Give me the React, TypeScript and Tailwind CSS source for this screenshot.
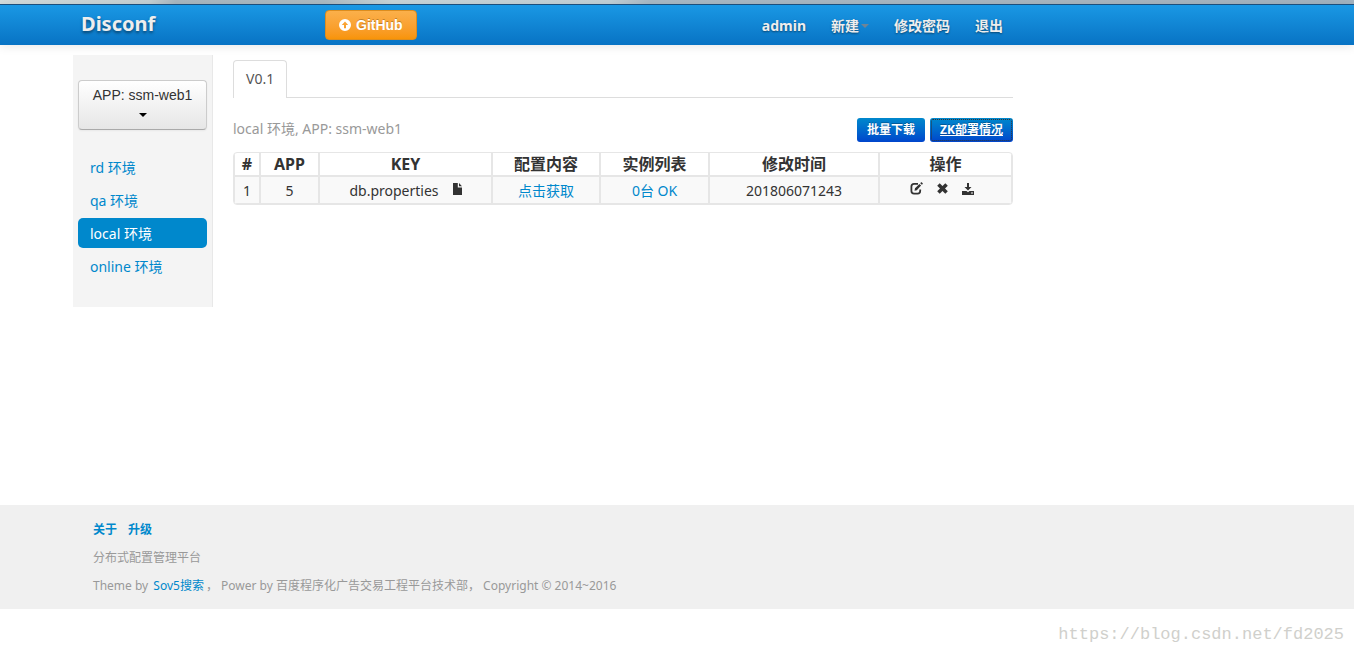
import type { ReactNode } from "react";

const environments = [
  { name: "rd 环境", active: false },
  { name: "qa 环境", active: false },
  { name: "local 环境", active: true },
  { name: "online 环境", active: false },
];

const columns = [
  { title: "#", width: "w-[25px]" },
  { title: "APP", width: "w-[59px]" },
  { title: "KEY", width: "w-[173px]" },
  { title: "配置内容", width: "w-[108px]" },
  { title: "实例列表", width: "w-[109px]" },
  { title: "修改时间", width: "w-[170px]" },
  { title: "操作", width: "w-[134px]" },
];

function UploadIcon() {
  return (
    <svg width="12" height="12" viewBox="0 0 12 12" aria-hidden="true">
      <path
        fillRule="evenodd"
        fill="#fff"
        d="M6 0a6 6 0 1 1 0 12A6 6 0 0 1 6 0ZM6 2.6 2.8 6H5v3.3h2V6h2.2Z"
      />
    </svg>
  );
}

function FileIcon() {
  return (
    <svg width="9" height="12" viewBox="0 0 9 12" aria-hidden="true">
      <path fill="#333" d="M0 0h4.800v4.600H9V12H0ZM6 0l3 3.300H6Z" />
    </svg>
  );
}

function EditIcon() {
  return (
    <svg width="13" height="13" viewBox="0 0 13 13" aria-hidden="true">
      <path
        fill="none"
        stroke="#333"
        strokeWidth="1.8"
        d="M8 1.9H4Q1.4 1.9 1.4 4.400v4.700q0 2.500 2.600 2.500h3.700q2.500 0 2.500-2.500V7.600"
      />
      <path fill="#333" d="m4.500 8.800.5-2.500 4.400-4.400 1.700 1.700L6.800 8.300ZM10.200 1.200l.9-.9q.3-.3.6 0l1 1q.3.3 0 .6l-.8.9Z" />
    </svg>
  );
}

function RemoveIcon() {
  return (
    <svg width="11" height="11" viewBox="0 0 11 11" aria-hidden="true">
      <path
        fill="#333"
        d="M2.700.2 5.500 3 8.300.2l2.500 2.500L8 5.500l2.800 2.800-2.500 2.500L5.500 8l-2.800 2.800L.2 8.300 3 5.500.2 2.700Z"
      />
    </svg>
  );
}

function DownloadIcon() {
  return (
    <svg width="12" height="12" viewBox="0 0 12 12" aria-hidden="true">
      <path fill="#333" d="M5 0h2v4h2.500L6 7.600 2.500 4H5Z" />
      <path fill="#333" fillRule="evenodd" d="M0 8h4.500L6 9.200 7.500 8H12v4H0ZM9 9.500v1h2v-1Z" />
    </svg>
  );
}

function Caret({ className }: { className: string }) {
  return (
    <svg className={className} width="8" height="4" viewBox="0 0 8 4" aria-hidden="true">
      <path fill="currentColor" d="M0 0h8L4 4Z" />
    </svg>
  );
}

function IconButton({ label, children }: { label: string; children: ReactNode }) {
  return (
    <button type="button" aria-label={label} className="flex cursor-pointer items-center">
      {children}
    </button>
  );
}

function Navbar() {
  return (
    <header>
      <div className="h-1 bg-[linear-gradient(90deg,#d3dddd_0%,#c6d2d5_11%,#a9b8c1_13%,#adbcc4_24%,#c9d6da_29%,#c3d2d8_45%,#a9bac6_48%,#a9b7c1_80%,#a3b4c1_100%)]" />
      <div className="h-[41px] border-t border-[#1c4f7c] bg-linear-to-b from-[#1a98e4] to-[#0873c4] shadow-[0_1px_10px_rgba(0,0,0,0.1)]">
        <div className="ml-[73px] flex h-10 max-w-[940px] items-center justify-between pr-2.5 pl-2">
          <div className="flex items-center">
            <a
              href="#"
              className="w-[244px] pb-0.5 text-xl leading-5 font-bold text-[#eee] [text-shadow:0_2px_3px_rgba(0,0,0,0.45)]"
            >
              Disconf
            </a>
            <a
              href="#"
              className="flex h-[30px] items-center gap-[5px] rounded border border-[#dd8d1e] bg-linear-to-b from-[#fbb04a] to-[#f89406] px-[13px] font-[Liberation_Sans,sans-serif] text-sm font-bold text-white [text-shadow:0_-1px_0_rgba(0,0,0,0.25)]"
            >
              <UploadIcon />
              GitHub
            </a>
          </div>
          <nav className="flex items-center gap-[25px] pt-0.5 text-sm font-bold text-[#eee] [text-shadow:0_1px_2px_rgba(0,0,0,0.45)]">
            <a href="#">admin</a>
            <a href="#" className="flex items-center gap-[2px]">
              新建
              <Caret className="text-[#6f8496]" />
            </a>
            <a href="#">修改密码</a>
            <a href="#">退出</a>
          </nav>
        </div>
      </div>
    </header>
  );
}

function Sidebar() {
  return (
    <aside className="h-[252px] w-[140px] shrink-0 border-r border-[#e8e8e8] bg-[#f4f4f4] px-[5px] pt-[25px]">
      <button
        type="button"
        className="flex h-[50px] w-full cursor-pointer flex-col items-center gap-2 rounded border border-[#ccc] border-b-[#aaa] bg-linear-to-b from-white to-[#e6e6e6] pt-1 font-[Liberation_Sans,sans-serif] text-sm text-[#333] shadow-[0_1px_2px_rgba(0,0,0,0.05)]"
      >
        <span>APP: ssm-web1</span>
        <Caret className="text-black" />
      </button>
      <ul className="mt-[22px] flex flex-col gap-[3px]">
        {environments.map((env) => (
          <li key={env.name}>
            <a
              href="#"
              className={
                env.active
                  ? "block rounded-[5px] bg-[#0088cc] px-3 pt-1.5 pb-1 leading-5 text-white"
                  : "block rounded-[5px] px-3 pt-1.5 pb-1 leading-5 text-[#0088cc]"
              }
            >
              {env.name}
            </a>
          </li>
        ))}
      </ul>
    </aside>
  );
}

const smallButton =
  "flex h-6 items-center rounded-[3px] bg-linear-to-b from-[#0088cc] to-[#0044cc] px-[10px] text-xs font-bold text-white [text-shadow:0_-1px_0_rgba(0,0,0,0.25)]";

function ConfigTable() {
  return (
    <div className="mt-[10px] overflow-hidden rounded border border-[#e6e6e6]">
      <table className="w-full table-fixed border-separate border-spacing-0 text-center">
        <thead>
          <tr className="h-6 text-base leading-5">
            {columns.map((column) => (
              <th
                key={column.title}
                scope="col"
                className={`${column.width} border-b-2 border-l-2 border-[#e6e6e6] p-0 font-bold first:border-l last:border-r`}
              >
                {column.title}
              </th>
            ))}
          </tr>
        </thead>
        <tbody>
          <tr className="h-[27px] bg-[#f9f9f9] leading-5 *:border-b *:border-l-2 *:border-[#e6e6e6] *:p-0 *:pt-px">
            <td className="first:border-l">1</td>
            <td>5</td>
            <td>
              <span className="flex items-center justify-center gap-[14px]">
                db.properties
                <span className="pb-1">
                  <IconButton label="查看文件">
                    <FileIcon />
                  </IconButton>
                </span>
              </span>
            </td>
            <td>
              <a href="#" className="text-[#0088cc]">点击获取</a>
            </td>
            <td>
              <a href="#" className="text-[#0088cc]">0台 OK</a>
            </td>
            <td>201806071243</td>
            <td className="last:border-r">
              <span className="flex items-center justify-center gap-[14px] pr-2 pb-1">
                <IconButton label="编辑"><EditIcon /></IconButton>
                <IconButton label="删除"><RemoveIcon /></IconButton>
                <IconButton label="下载"><DownloadIcon /></IconButton>
              </span>
            </td>
          </tr>
        </tbody>
      </table>
    </div>
  );
}

function Footer() {
  return (
    <footer className="bg-[#f0f0f0] pt-[15px] pb-[13px] pl-[93px] text-xs leading-5 text-[#999]">
      <div className="flex flex-col gap-2">
        <p className="flex gap-[11px] font-bold text-[#0088cc]">
          <a href="#">关于</a>
          <a href="#">升级</a>
        </p>
        <p>分布式配置管理平台</p>
        <p>
          Theme by <a href="#" className="mx-0.5 text-[#0088cc]">Sov5搜索</a>， Power by 百度程序化广告交易工程平台技术部， Copyright © 2014~2016
        </p>
      </div>
    </footer>
  );
}

export default function App() {
  return (
    <div className="min-h-screen bg-white font-[Noto_Sans,Noto_Sans_CJK_SC,sans-serif] text-sm text-[#333]">
      <Navbar />
      <main className="ml-[73px] flex min-h-[460px] max-w-[940px] items-start gap-5 pt-[10px]">
        <Sidebar />
        <section className="min-w-0 flex-1 pt-[5px]">
          <div className="flex h-[38px] border-b border-[#ddd]">
            <a
              href="#"
              className="-mb-px rounded-t border border-b-0 border-[#ddd] bg-white px-3 py-2 leading-5 text-[#555]"
            >
              V0.1
            </a>
          </div>
          <div className="mt-5 flex items-center justify-between">
            <p className="pb-0.5 leading-5 text-[#999]">local 环境, APP: ssm-web1</p>
            <div className="flex gap-[5px]">
              <a href="#" className={smallButton}>批量下载</a>
              <a
                href="#"
                className={`${smallButton} underline outline-1 -outline-offset-2 outline-dotted outline-[#333]`}
              >
                ZK部署情况
              </a>
            </div>
          </div>
          <ConfigTable />
        </section>
      </main>
      <Footer />
      <p className="flex justify-end pt-[14px] pr-[10px] font-[Liberation_Mono,monospace] text-[17px] leading-6 text-[#d0d0cc]">
        https://blog.csdn.net/fd2025
      </p>
    </div>
  );
}
